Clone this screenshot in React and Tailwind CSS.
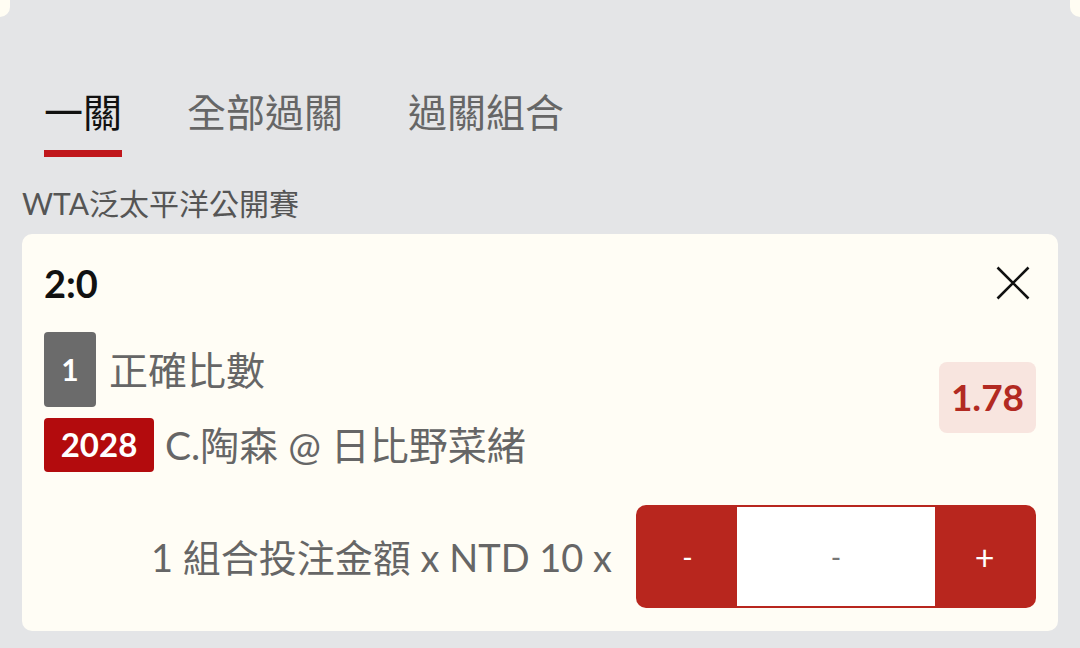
export default function App() {
  const font = "font-['Lato','Noto_Sans_CJK_TC',sans-serif]";
  return (
    <div className={`w-[1080px] h-[648px] bg-[#e4e5e7] overflow-hidden ${font}`}>
      <div className="flex justify-between h-[17px]">
        <div className="w-[10px] h-full bg-[#fffdf3] rounded-br-[14px]" />
        <div className="w-[10px] h-full bg-[#fffdf3] rounded-bl-[14px]" />
      </div>

      <div className="mt-[72px] pl-[44px] flex gap-[65px]">
        <div className="flex flex-col">
          <span className="text-[39px] leading-[46px] text-[#111]">一關</span>
          <div className="mt-[15px] h-[7px] bg-[#c0171c]" />
        </div>
        <div className="flex flex-col">
          <span className="text-[39px] leading-[46px] text-[#666]">全部過關</span>
        </div>
        <div className="flex flex-col">
          <span className="text-[39px] leading-[46px] text-[#666]">過關組合</span>
        </div>
      </div>

      <div className="mt-[28px] pl-[22px] text-[30px] leading-[36px] text-[#555]">WTA泛太平洋公開賽</div>

      <div className="mt-[13px] mx-[22px] h-[397px] rounded-[10px] bg-[#fffdf5] flex flex-col">
        <div className="pt-[30px] pl-[22px] pr-[28px] flex items-center justify-between">
          <span className="text-[38px] leading-[38px] font-bold text-[#111]">2:0</span>
          <svg width="34" height="34" viewBox="0 0 34 34" className="text-[#111]">
            <path d="M1.5 1.5 L32.5 32.5 M32.5 1.5 L1.5 32.5" stroke="currentColor" strokeWidth="2.6" fill="none" />
          </svg>
        </div>

        <div className="mt-[30px] pl-[22px] pr-[22px] flex items-center justify-between">
          <div className="flex flex-col gap-[11px]">
            <div className="flex items-center">
              <div className="w-[52px] h-[75px] rounded-[4px] bg-[#6b6b6b] flex items-center justify-center text-white font-bold text-[30px]">1</div>
              <span className="ml-[13px] text-[39px] leading-[44px] text-[#666]">正確比數</span>
            </div>
            <div className="flex items-center">
              <div className="w-[110px] h-[54px] rounded-[4px] bg-[#b30b0d] flex items-center justify-center text-white font-bold text-[33px]">2028</div>
              <span className="ml-[11px] text-[39px] leading-[44px] text-[#666]">C.陶森 @ 日比野菜緒</span>
            </div>
          </div>
          <div className="mt-[-10px] w-[97px] h-[71px] rounded-[8px] bg-[#f8e5df] flex items-center justify-center text-[#b22a22] font-bold text-[37px]">1.78</div>
        </div>

        <div className="mt-[33px] pr-[22px] flex items-center justify-end">
          <span className="text-[38px] leading-[44px] text-[#666]">1 組合投注金額 x NTD 10 x</span>
          <div className="ml-[24px] w-[400px] h-[103px] rounded-[10px] bg-[#b8261e] flex p-[2px]">
            <div className="w-[99px] flex items-center justify-center text-white text-[28px]">-</div>
            <div className="flex-1 bg-white flex items-center justify-center text-[#777] text-[28px]">-</div>
            <div className="w-[99px] flex items-center justify-center text-white text-[34px]">+</div>
          </div>
        </div>
      </div>
    </div>
  );
}
